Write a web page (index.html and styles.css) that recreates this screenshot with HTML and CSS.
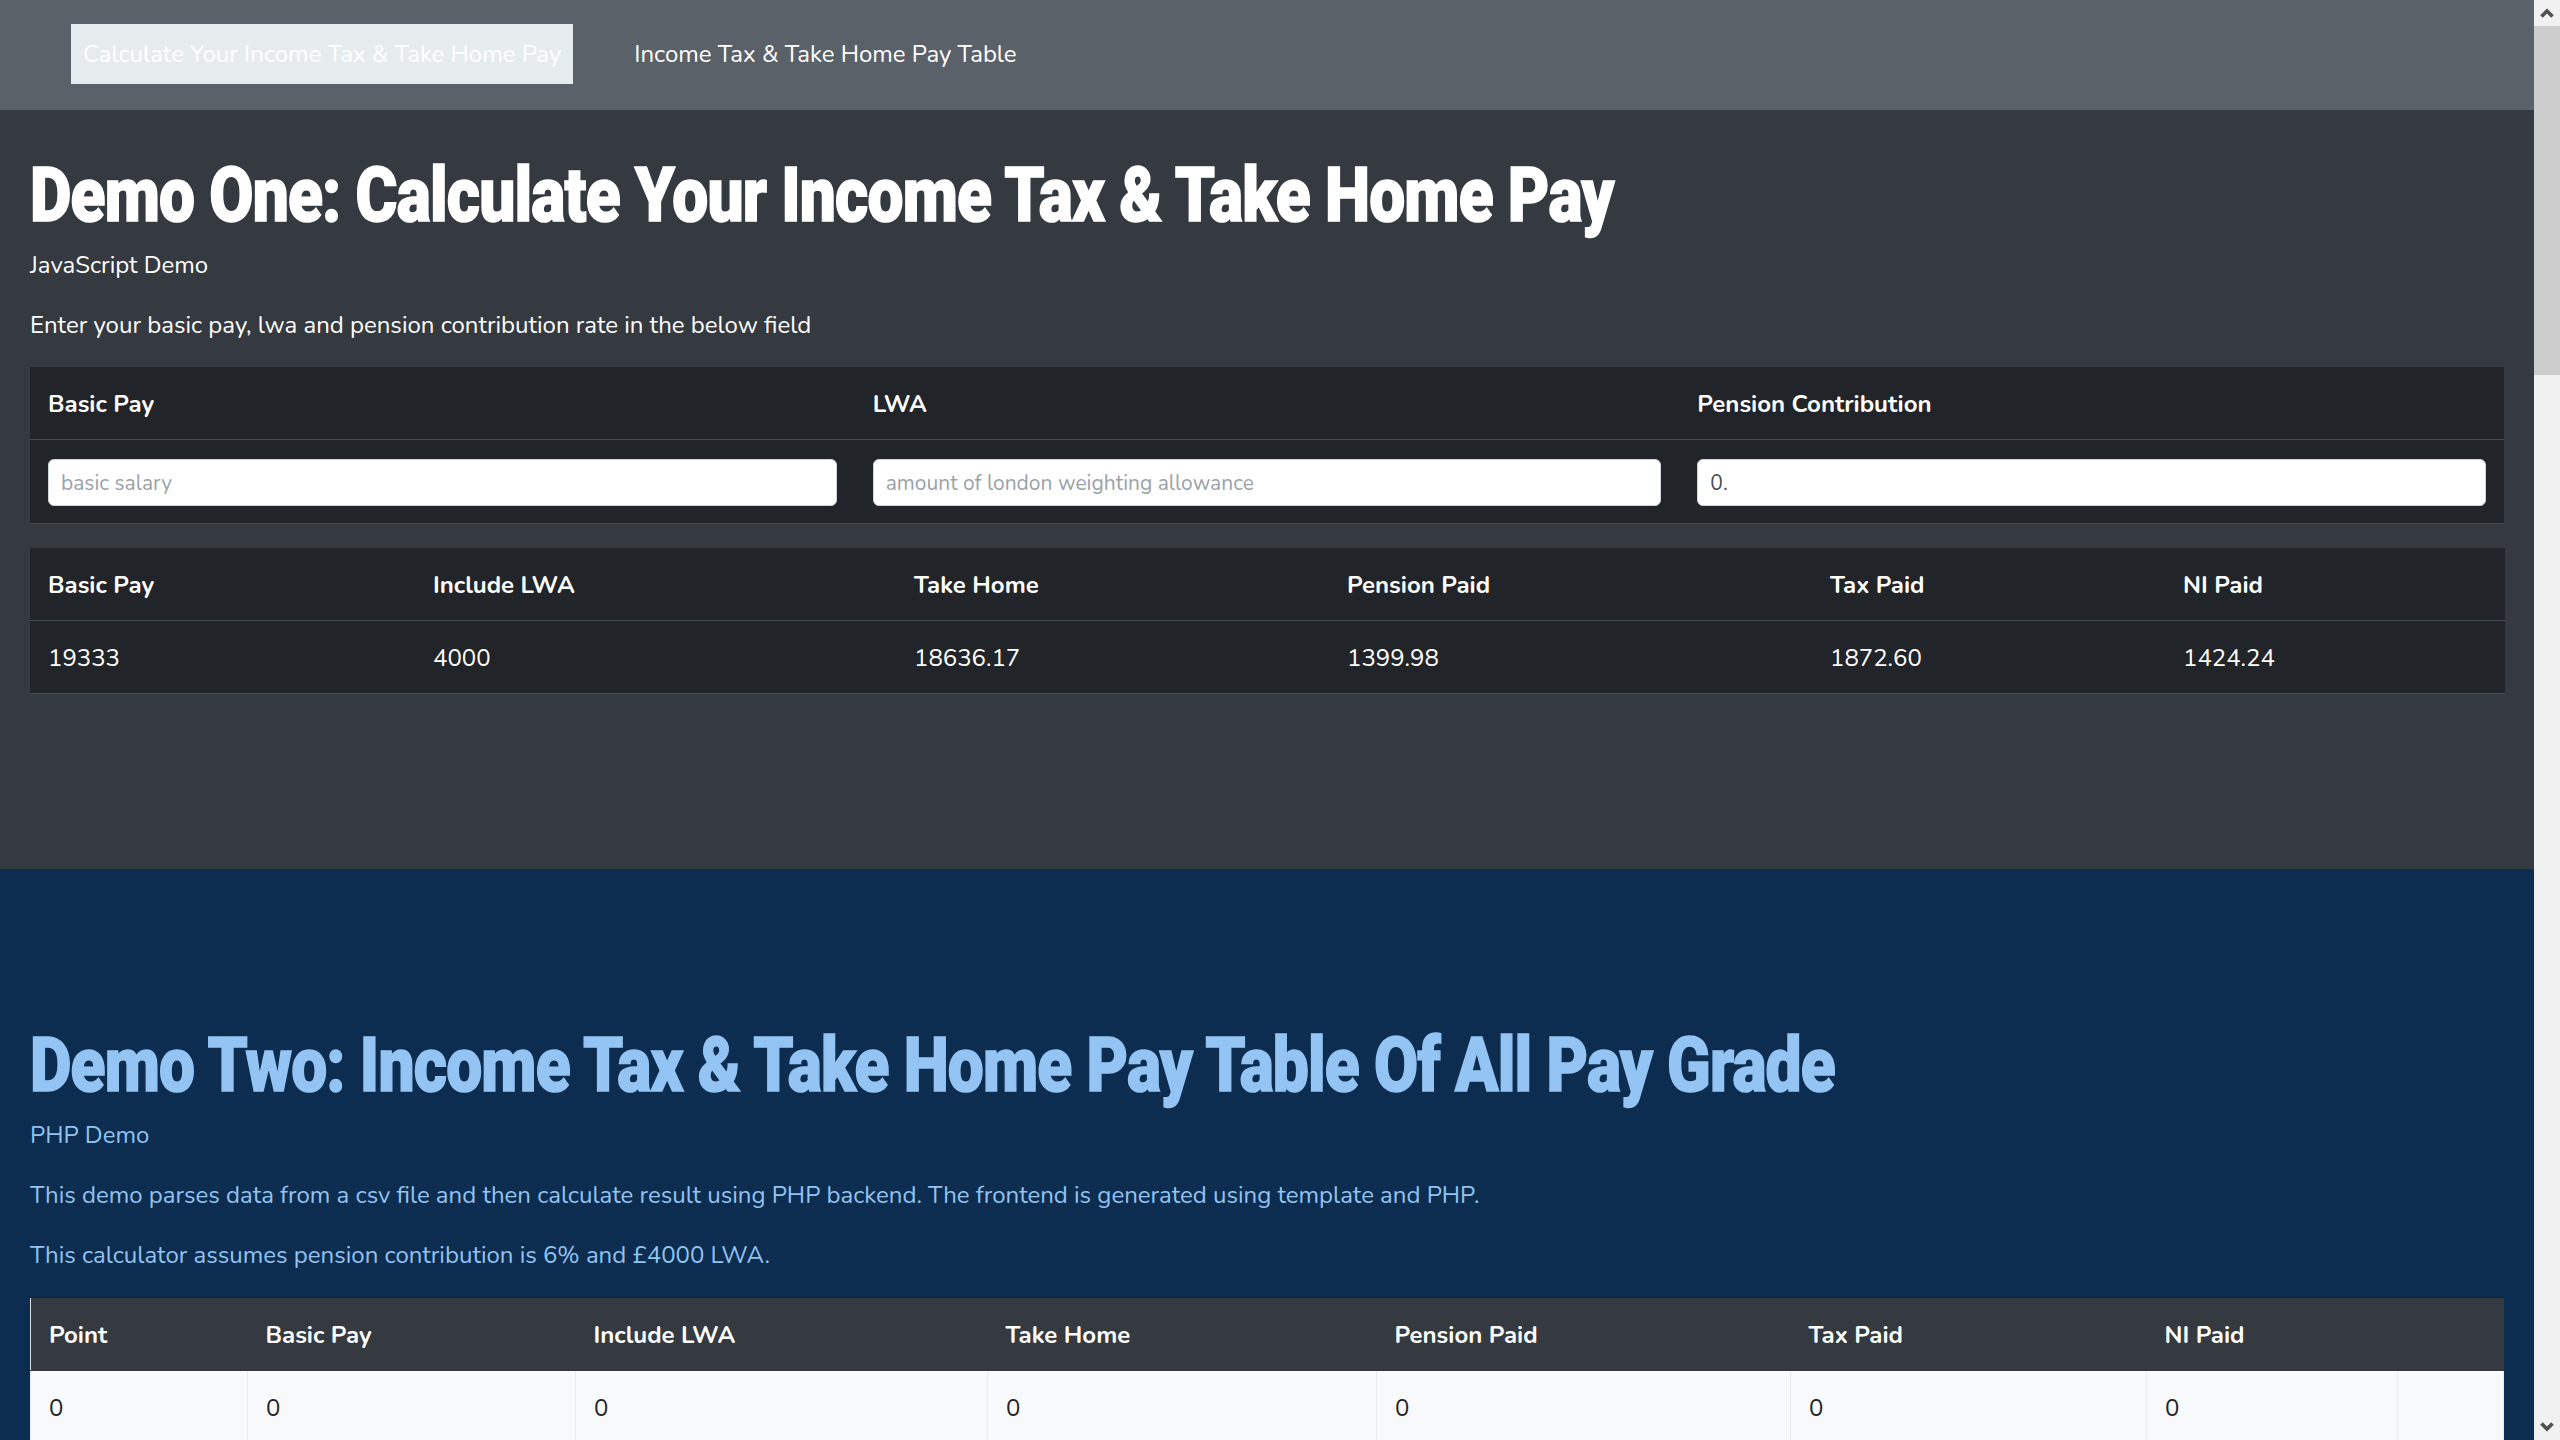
FILE: index.html
```html
<!DOCTYPE html>
<html lang="en">
<head>
<meta charset="utf-8">
<title>Income Tax &amp; Take Home Pay</title>
<link rel="stylesheet" href="styles.css">
</head>
<body>
<nav class="topnav">
  <a class="nav-link active" href="#demo-one">Calculate Your Income Tax &amp; Take Home Pay</a>
  <a class="nav-link" href="#demo-two">Income Tax &amp; Take Home Pay Table</a>
</nav>

<section class="demo demo-one" id="demo-one">
  <h1 class="demo-title">Demo One: Calculate Your Income Tax &amp; Take Home Pay</h1>
  <p class="demo-text">JavaScript Demo</p>
  <p class="demo-text">Enter your basic pay, lwa and pension contribution rate in the below field</p>

  <table class="tbl tbl-dark tbl-inputs">
    <thead>
      <tr><th>Basic Pay</th><th>LWA</th><th>Pension Contribution</th></tr>
    </thead>
    <tbody>
      <tr>
        <td><input class="field" type="text" placeholder="basic salary"></td>
        <td><input class="field" type="text" placeholder="amount of london weighting allowance"></td>
        <td><input class="field" type="text" value="0."></td>
      </tr>
    </tbody>
  </table>

  <table class="tbl tbl-dark tbl-result">
    <thead>
      <tr><th>Basic Pay</th><th>Include LWA</th><th>Take Home</th><th>Pension Paid</th><th>Tax Paid</th><th>NI Paid</th></tr>
    </thead>
    <tbody>
      <tr><td>19333</td><td>4000</td><td>18636.17</td><td>1399.98</td><td>1872.60</td><td>1424.24</td></tr>
    </tbody>
  </table>
</section>

<section class="demo demo-two" id="demo-two">
  <h1 class="demo-title">Demo Two: Income Tax &amp; Take Home Pay Table Of All Pay Grade</h1>
  <p class="demo-text">PHP Demo</p>
  <p class="demo-text">This demo parses data from a csv file and then calculate result using PHP backend. The frontend is generated using template and PHP.</p>
  <p class="demo-text">This calculator assumes pension contribution is 6% and &pound;4000 LWA.</p>

  <table class="tbl tbl-grades">
    <thead>
      <tr><th>Point</th><th>Basic Pay</th><th>Include LWA</th><th>Take Home</th><th>Pension Paid</th><th>Tax Paid</th><th>NI Paid</th><th></th></tr>
    </thead>
    <tbody class="grade-body">
      <tr><td>0</td><td>0</td><td>0</td><td>0</td><td>0</td><td>0</td><td>0</td><td></td></tr>
    </tbody>
  </table>
</section>

<div class="scrollbar" aria-hidden="true">
  <span class="sb-btn">
    <svg width="26" height="26" viewBox="0 0 26 26"><polyline points="7.5,16.5 13,11 18.5,16.5" fill="none" stroke="#505050" stroke-width="3.6"/></svg>
  </span>
  <span class="sb-thumb"></span>
  <span class="sb-track"></span>
  <span class="sb-btn">
    <svg width="26" height="26" viewBox="0 0 26 26"><polyline points="7.5,9.5 13,15 18.5,9.5" fill="none" stroke="#505050" stroke-width="3.6"/></svg>
  </span>
</div>
<script src="script.js"></script>
</body>
</html>
```

FILE: styles.css
```css
* { box-sizing: border-box; }

html, body { margin: 0; padding: 0; }

body {
  font-family: "Nunito", "Lato", "Noto Sans", sans-serif;
  font-size: 24px;
  line-height: 1.5;
  color: #ffffff;
  background: #0c2d4f;
  padding-right: 26px;
}

/* top navigation */
.topnav {
  display: flex;
  align-items: center;
  gap: 49px;
  padding: 24px 0 26px 71px;
  background: #5a6169;
}
.nav-link {
  display: block;
  padding: 12px;
  line-height: 36px;
  color: #ffffff;
  text-decoration: none;
}
.nav-link.active { background: #e6ebee; }

/* sections */
.demo { padding: 0 30px; }
.demo-one { background: #343a3f; padding-top: 40px; padding-bottom: 151px; }
.demo-two { background: #0c2d4f; padding-top: 151px; padding-bottom: 151px; color: #92c3f1; }

.demo-title {
  margin: 0 0 7px;
  font-family: "Roboto", "Liberation Sans", sans-serif;
  font-weight: 900;
  font-size: 76px;
  line-height: 90px;
  letter-spacing: -1px;
  white-space: nowrap;
  -webkit-text-stroke: 1.5px currentColor;
  transform: scaleX(0.843);
  transform-origin: left center;
}
.demo-two .demo-title { color: #94c4f3; }

.demo-text { margin: 0 0 24px; }

/* tables */
.tbl {
  width: 100%;
  border-collapse: collapse;
  table-layout: fixed;
  margin-bottom: 24px;
}
.tbl th, .tbl td {
  padding: 19px 18px 17px;
  text-align: left;
  vertical-align: top;
  line-height: 36px;
}
.tbl th { font-weight: 700; }

.tbl-dark { background: #212529; color: #ffffff; }
.tbl-dark th, .tbl-dark td { border-bottom: 1px solid #454d55; }
.tbl-inputs td { padding: 19px 18px 17px; }

.field {
  display: block;
  width: 100%;
  height: 47px;
  padding: 6px 12px;
  font-family: inherit;
  font-size: 21px;
  line-height: 31px;
  color: #495057;
  background: #ffffff;
  border: 1px solid #ced4da;
  border-radius: 6px;
  outline: none;
}
.field::placeholder { color: #9aa2a9; }

.tbl-result th:nth-child(1) { width: 385px; }
.tbl-result th:nth-child(2) { width: 481px; }
.tbl-result th:nth-child(3) { width: 433px; }
.tbl-result th:nth-child(4) { width: 483px; }
.tbl-result th:nth-child(5) { width: 353px; }
.tbl-result th:nth-child(6) { width: 340px; }

.tbl-grades { border-left: 1px solid #dee2e6; }
.tbl-grades thead th {
  background: #343a40;
  color: #ffffff;
  border-top: 1px solid #1c2024;
  border-bottom: 1px solid #343a40;
}
.tbl-grades tbody td {
  background: #f8f9fa;
  color: #212529;
  border: 1px solid #e9ecef;
}
.tbl-grades th:nth-child(1) { width: 217px; }
.tbl-grades th:nth-child(2) { width: 328px; }
.tbl-grades th:nth-child(3) { width: 412px; }
.tbl-grades th:nth-child(4) { width: 389px; }
.tbl-grades th:nth-child(5) { width: 414px; }
.tbl-grades th:nth-child(6) { width: 356px; }
.tbl-grades th:nth-child(7) { width: 251px; }
.tbl-grades th:nth-child(8) { width: 106px; }

/* window scrollbar, drawn over the right edge */
.scrollbar {
  position: fixed;
  top: 0;
  right: 0;
  width: 26px;
  height: 100vh;
  display: flex;
  flex-direction: column;
  background: #f1f1f1;
}
.sb-btn {
  display: block;
  height: 26px;
  flex: none;
}
.sb-btn svg { display: block; }
.sb-thumb {
  display: block;
  height: 349px;
  flex: none;
  background: #cdcdcd;
}
.sb-track { display: block; flex: 1; }
```

FILE: script.js
```js
(function () {
  var body = document.querySelector('.grade-body');
  if (!body) return;
  var lwa = 4000;
  for (var p = 1; p <= 56; p++) {
    var basic = 17364 + (p - 1) * 612;
    var total = basic + lwa;
    var pension = total * 0.06;
    var tax = Math.max(0, (total - pension - 12500) * 0.2);
    var ni = Math.max(0, (total - 9500) * 0.12);
    var take = total - pension - tax - ni;
    var values = [p, basic, total, take.toFixed(2), pension.toFixed(2), tax.toFixed(2), ni.toFixed(2), ''];
    var tr = document.createElement('tr');
    for (var i = 0; i < values.length; i++) {
      var td = document.createElement('td');
      td.textContent = values[i];
      tr.appendChild(td);
    }
    body.appendChild(tr);
  }
})();
```
